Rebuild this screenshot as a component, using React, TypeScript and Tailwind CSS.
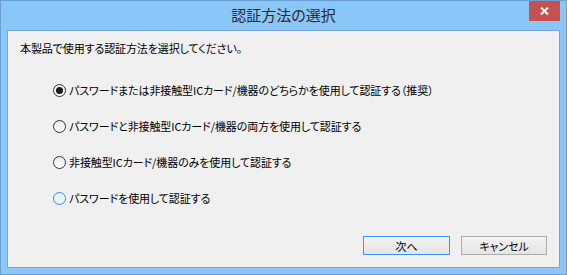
const font = {
  fontFamily: '"Noto Sans CJK JP", "Noto Sans", sans-serif',
}

const options = [
  { label: 'パスワードまたは非接触型ICカード/機器のどちらかを使用して認証する（推奨）', checked: true, hover: false },
  { label: 'パスワードと非接触型ICカード/機器の両方を使用して認証する', checked: false, hover: false },
  { label: '非接触型ICカード/機器のみを使用して認証する', checked: false, hover: false },
  { label: 'パスワードを使用して認証する', checked: false, hover: true },
]

function Radio({ checked, hover }: { checked: boolean; hover: boolean }) {
  return (
    <span
      className={`w-[13px] h-[13px] rounded-full border flex items-center justify-center shrink-0 ${
        hover
          ? 'border-[#3c8ce6] bg-[#eaf4ff]'
          : 'border-[#333333] bg-gradient-to-b from-[#ebebeb] to-[#ffffff]'
      }`}
    >
      {checked && <span className="w-[7px] h-[7px] rounded-full bg-[#1a1a1a]" />}
    </span>
  )
}

export default function App() {
  return (
    <div
      style={font}
      className="w-[567px] h-[275px] flex flex-col border border-[#6c9fd2] bg-[#8ac6f8] [font-feature-settings:'palt']"
    >
      <div className="h-[29px] grid grid-cols-[1fr_auto_1fr]">
        <div />
        <div className="pt-[5px] text-[15px] leading-[18px] text-[#2b2b2b]">
          認証方法の選択
        </div>
        <div className="flex justify-end pr-[6px]">
          <div className="w-[31px] h-[20px] bg-[#c75050] flex items-center justify-center">
            <svg width="9" height="8" viewBox="0 0 9 8">
              <path d="M1 0.5 L8 7.5 M8 0.5 L1 7.5" stroke="#ffffff" strokeWidth="2" />
            </svg>
          </div>
        </div>
      </div>
      <div className="flex-1 px-[6px] pb-[6px] flex">
        <div className="flex-1 flex flex-col border border-[#72a6d8] bg-[#f0f0f0] text-[11px] leading-[16px] tracking-[-0.1px] text-black pl-[12px] pr-[12px] pt-[9px] pb-[12px]">
          <div>本製品で使用する認証方法を選択してください。</div>
          <div className="flex flex-col gap-[20px] mt-[26px] pl-[33px]">
            {options.map((o) => (
              <div key={o.label} className="h-[16px] flex items-center gap-[3px]">
                <Radio checked={o.checked} hover={o.hover} />
                <span>{o.label}</span>
              </div>
            ))}
          </div>
          <div className="mt-auto flex justify-end gap-[11px]">
            <button className="w-[87px] h-[19px] border border-[#3399ff] bg-gradient-to-b from-[#f2f2f2] to-[#e5e5e5] text-[11px] leading-[16px]">
              次へ
            </button>
            <button className="w-[86px] h-[19px] border border-[#acacac] bg-gradient-to-b from-[#f2f2f2] to-[#e5e5e5] text-[11px] leading-[16px]">
              キャンセル
            </button>
          </div>
        </div>
      </div>
    </div>
  )
}
